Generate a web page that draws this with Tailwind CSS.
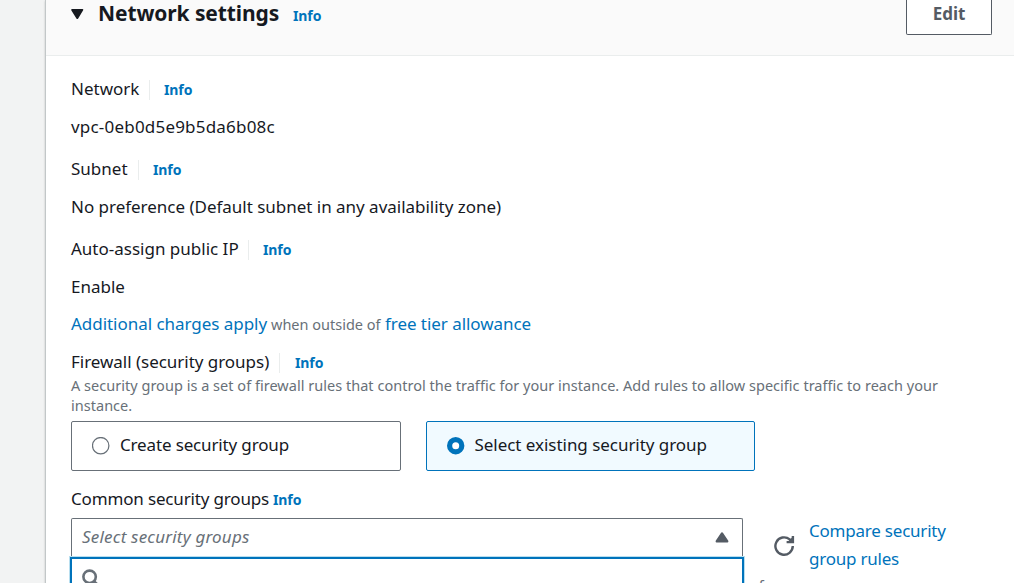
<!DOCTYPE html>
<html lang="en">
<head>
<meta charset="utf-8">
<title>Network settings</title>
<script src="https://cdn.jsdelivr.net/npm/@tailwindcss/browser@4"></script>
</head>
<body class="h-[583px] w-[1014px] overflow-hidden bg-[#f2f3f3] font-['Noto_Sans',sans-serif] text-[17px] leading-7 text-[#16191f]">
<main class="ml-[45px] h-[583px] overflow-hidden whitespace-nowrap border-l border-[#c2c7c8] bg-white shadow-[0_1px_2px_rgba(0,0,0,0.2)]">
  <header class="flex h-14 items-start justify-between border-b border-[#eaeded] bg-[#fafafa] pl-[25px] pr-[22px]">
    <div class="flex">
      <svg class="mt-[9px] h-[11px] w-[13px]" viewBox="0 0 13 11" fill="#16191f"><path d="M1 0H11.5Q12.8 .2 12 1.4L7.2 9.4Q6.3 10.6 5.4 9.4L.4 1.4Q-.2 .2 1 0Z"/></svg>
      <h2 class="-mt-px ml-[14px] w-[195px] text-[21px] font-bold tracking-[-0.1px]">Network settings</h2>
      <a class="mt-0.5 text-sm/7 font-bold tracking-[-0.1px] text-[#0073bb]">Info</a>
    </div>
    <button class="h-[35px] w-[86px] rounded-b-[2px] border border-t-0 border-[#545b64] bg-white pb-[7px] font-bold leading-7 text-[#545b64]">Edit</button>
  </header>
  <section class="pl-[25px]">
    <div class="mt-[19px] flex h-7">
      <span class="w-[78px]">Network</span><i class="mt-[5px] h-5 w-px bg-[#eaeded]"></i>
      <a class="ml-[14px] mt-px text-sm/7 font-bold tracking-[-0.1px] text-[#0073bb]">Info</a>
    </div>
    <p class="mt-2.5 tracking-[0.2px]">vpc-0eb0d5e9b5da6b08c</p>
    <div class="mt-3.5 flex h-7">
      <span class="w-[67px]">Subnet</span><i class="mt-[5px] h-5 w-px bg-[#eaeded]"></i>
      <a class="ml-[14px] mt-px text-sm/7 font-bold tracking-[-0.1px] text-[#0073bb]">Info</a>
    </div>
    <p class="mt-2.5 tracking-[-0.02px]">No preference (Default subnet in any availability zone)</p>
    <div class="mt-3.5 flex h-7">
      <span class="w-[177px]">Auto-assign public IP</span><i class="mt-[5px] h-5 w-px bg-[#eaeded]"></i>
      <a class="ml-[14px] mt-px text-sm/7 font-bold tracking-[-0.1px] text-[#0073bb]">Info</a>
    </div>
    <p class="mt-2.5">Enable</p>
    <p class="mt-[9px] flex h-7 text-[#0073bb]">
      <a class="w-[200px] tracking-[-0.04px]">Additional charges apply</a><span class="w-[114px] text-[14.5px] text-[#687078]">when outside of</span><a class="tracking-[-0.05px]">free tier allowance</a>
    </p>
    <div class="mt-2.5 flex h-[27px]">
      <span class="w-[208px] tracking-[-0.03px]">Firewall (security groups)</span><i class="mt-[5px] h-5 w-px bg-[#eaeded]"></i>
      <a class="ml-[15px] mt-px text-sm/7 font-bold tracking-[-0.1px] text-[#0073bb]">Info</a>
    </div>
    <p class="text-[14.5px] leading-5 tracking-[0.023px] text-[#687078]">A security group is a set of firewall rules that control the traffic for your instance. Add rules to allow specific traffic to reach your<br>instance.</p>
    <div class="mt-1.5 flex gap-[25px]">
      <label class="flex h-[50px] w-[330px] rounded-[2px] border border-[#687078] pl-5 pt-[9px]">
        <svg class="mt-[6px] h-[18px] w-[18px]" viewBox="0 0 18 18"><circle cx="8.7" cy="8.7" r="8.2" fill="#fff" stroke="#687078" stroke-width="1.25"/></svg>
        <span class="ml-[10px] tracking-[-0.15px]">Create security group</span>
      </label>
      <label class="flex h-[50px] w-[329px] rounded-[2px] border border-[#0073bb] bg-[#f1faff] pl-5 pt-[9px]">
        <svg class="mt-[6px] h-[18px] w-[18px]" viewBox="0 0 18 18"><circle cx="8.7" cy="8.7" r="6.1" fill="#fff" stroke="#0073bb" stroke-width="5.2"/></svg>
        <span class="ml-[9.5px] tracking-[-0.04px]">Select existing security group</span>
      </label>
    </div>
    <div class="mt-3.5 flex h-7">
      <span class="w-[202px] tracking-[-0.16px]">Common security groups</span>
      <a class="mt-px text-sm/7 font-bold tracking-[-0.1px] text-[#0073bb]">Info</a>
    </div>
    <div class="mt-[5px] flex">
      <div class="w-[672px]">
        <div class="flex h-[39px] justify-between rounded-t-[2px] border border-b-0 border-[#687078] pl-2.5 pr-[13px] pt-1 italic text-[#687078]">
          <span class="tracking-[0.2px]">Select security groups</span>
          <svg class="mt-[9px] h-[11px] w-[14px]" viewBox="0 0 14 11" fill="#545b64"><path d="M7 .2Q7.7 .2 8.1 .9L13.3 8.8Q13.8 10.4 12.6 10.5H1.4Q.2 10.4 .7 8.8L5.9 .9Q6.3 .2 7 .2Z"/></svg>
        </div>
        <div class="-mx-px h-16 border-2 border-[#0073bb] pl-2.5 pt-2.5 shadow-[0_0_0_1px_#b8dff0]">
          <svg class="h-[18px] w-[18px]" viewBox="0 0 18 18" fill="none" stroke="#687078" stroke-width="2.6"><circle cx="7.6" cy="7.8" r="6.2"/><path d="M12 12.2L17 17"/></svg>
        </div>
      </div>
      <svg class="ml-[31px] mt-[17px] h-[21px] w-[21px]" viewBox="0 0 21 21" fill="none" stroke="#545b64" stroke-width="2.4"><path d="M18.8 11A8.7 8.7 0 1 1 15.7 4.4L17.5 6"/><path d="M18.9 .9V7.1H12.6"/><path d="M18 2.6L14 6.6H18Z" fill="#545b64" stroke="none"/></svg>
      <a class="-mt-px ml-[14px] tracking-[-0.22px] text-[#0073bb]">Compare security<br>group rules</a>
      <span class="-ml-[187px] mt-[53px] text-[14.5px] text-[#687078]">f</span>
    </div>
  </section>
</main>
</body>
</html>
